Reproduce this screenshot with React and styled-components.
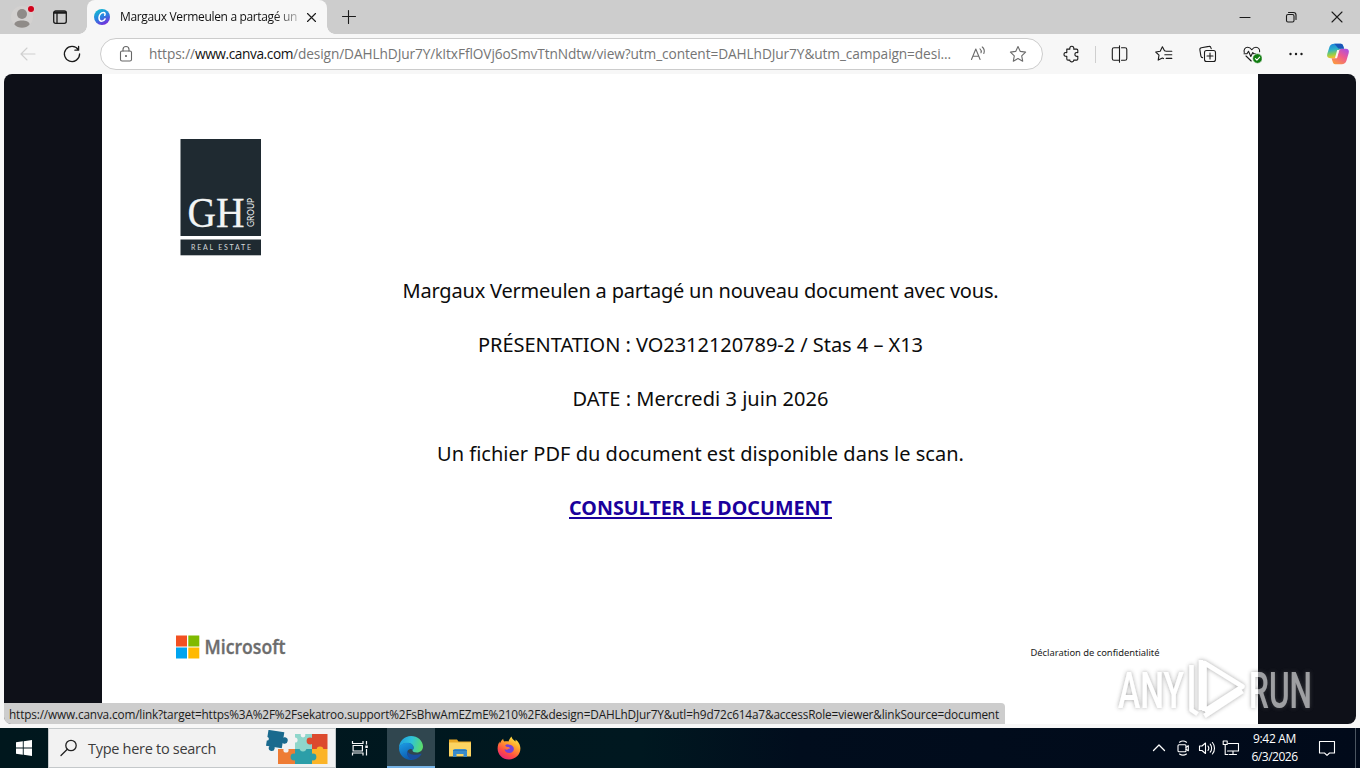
import React, { useLayoutEffect, useRef, useState } from 'react';
import styled, { createGlobalStyle, css } from 'styled-components';

const UI_FONT = '"Open Sans", "Noto Sans", sans-serif';

const GlobalStyle = createGlobalStyle`
    * {
        box-sizing: border-box;
    }

    body {
        margin: 0;
        overflow: hidden;
        font-family: ${UI_FONT};
    }

    svg {
        display: block;
        flex: none;
    }
`;

const Screen = styled.div`
    position: relative;
    width: 1360px;
    height: 768px;
    display: flex;
    flex-direction: column;
    overflow: hidden;
    background: #f7f7f7;
`;

/* ---------- fitted text ---------- */

const FitBox = styled.span`
    display: inline-block;
    white-space: pre;
    flex: none;
`;

// Spreads or tightens a single line so that it takes exactly `width` pixels.
const Fit = ({ width, children, className }) => {
    const ref = useRef(null);
    const [spacing, setSpacing] = useState(0);

    useLayoutEffect(() => {
        const natural = ref.current.getBoundingClientRect().width;
        setSpacing((width - natural) / children.length);
    }, []);

    return (
        <FitBox ref={ref} className={className} style={{ letterSpacing: `${spacing}px` }}>
            {children}
        </FitBox>
    );
};

/* ---------- tab strip ---------- */

const TabStrip = styled.div`
    height: 34px;
    flex: none;
    display: flex;
    align-items: stretch;
    background: #cdcdcd;
`;

const StripCell = styled.div`
    width: ${props => props.width}px;
    display: flex;
    align-items: center;
    justify-content: center;
`;

const Tab = styled.div`
    position: relative;
    width: 240px;
    display: flex;
    align-items: center;
    padding-left: 7px;
    background: #f7f7f7;
    border-radius: 8px 8px 0 0;

    &::before,
    &::after {
        content: '';
        position: absolute;
        bottom: 0;
        width: 8px;
        height: 8px;
    }

    &::before {
        left: -8px;
        background: radial-gradient(circle at 0 0, #cdcdcd 7.5px, #f7f7f7 8px);
    }

    &::after {
        right: -8px;
        background: radial-gradient(circle at 100% 0, #cdcdcd 7.5px, #f7f7f7 8px);
    }
`;

const TabTitle = styled.div`
    width: 177px;
    margin: 0 7px 0 10px;
    font-size: 12px;
    line-height: 18px;
    color: #101010;
    overflow: hidden;
    mask-image: linear-gradient(90deg, #000 154px, rgba(0, 0, 0, 0.3) 177px);
`;

const WindowButtons = styled.div`
    margin-left: auto;
    display: flex;
`;

/* ---------- toolbar ---------- */

const Toolbar = styled.div`
    height: 40px;
    flex: none;
    display: flex;
    align-items: center;
    background: #f7f7f7;
`;

const AddressBar = styled.div`
    width: 943px;
    height: 32px;
    display: flex;
    align-items: center;
    padding-left: 15px;
    background: #ffffff;
    border: 1px solid #cccccc;
    border-radius: 16px;
`;

const Url = styled.div`
    display: flex;
    margin: 0 16px 0 13px;
    font-size: 13.7px;
    line-height: 20px;
    color: #757575;
`;

const Host = styled(Fit)`
    color: #111111;
`;

const ToolGroup = styled.div`
    display: flex;
    align-items: center;
    padding-left: 7px;
`;

const ToolCell = styled.div`
    width: ${props => props.width || 44}px;
    height: 40px;
    flex: none;
    display: flex;
    align-items: center;
    justify-content: center;
`;

const ToolDivider = styled.div`
    width: 1px;
    height: 17px;
    margin: 0 2px 0 1px;
    background: #cfcfcf;
`;

/* ---------- page ---------- */

const Viewport = styled.div`
    height: 650px;
    flex: none;
    margin: 0 4px;
    display: flex;
    justify-content: center;
    background: #0e1018;
    border-radius: 8px;
    overflow: hidden;
`;

const Slide = styled.div`
    width: 1156px;
    display: flex;
    flex-direction: column;
    padding-top: 65px;
    background: #ffffff;
`;

const AgencyLogo = styled.div`
    padding-left: 78px;
`;

const Message = styled.div`
    display: flex;
    flex-direction: column;
    align-items: center;
    margin-top: 7.4px;
    padding-left: 41px;
`;

const Line = styled.div`
    height: 54.4px;
    display: flex;
    align-items: center;
    font-family: "Noto Sans", "Open Sans", sans-serif;
    font-size: 20px;
    line-height: 28px;
    color: #0c0c0c;
    ${props => props.link && css`
        color: #1a009c;
        font-weight: 700;
        font-size: 19.7px;
        text-decoration: underline;
        text-decoration-thickness: 2px;
        text-underline-offset: 2px;
    `}
`;

const SlideFooter = styled.div`
    display: flex;
    align-items: flex-start;
    justify-content: space-between;
    margin-top: 97.6px;
    padding: 0 98.5px 0 73px;
`;

const Privacy = styled.div`
    margin-top: 13px;
    font-family: "Noto Sans", sans-serif;
    font-size: 9.4px;
    line-height: 14px;
    color: #1b1b1b;
`;

const StatusBubble = styled.div`
    position: absolute;
    left: 4px;
    top: 703px;
    width: 1001px;
    height: 21px;
    display: flex;
    align-items: center;
    padding: 1px 0 0 5px;
    background: #cdcdcd;
    border-radius: 0 4px 0 7px;
    font-size: 11.8px;
    line-height: 20px;
    color: #1b1b1b;
`;

const Watermark = styled.div`
    position: absolute;
    left: 1110px;
    top: 650px;
`;

/* ---------- taskbar ---------- */

const Taskbar = styled.div`
    height: 40px;
    margin-top: 4px;
    flex: none;
    display: flex;
    background: linear-gradient(90deg, #00171d 0, #001820 640px, #010d1d 800px, #010a1a 100%);
`;

const TaskCell = styled.div`
    width: 48px;
    margin-right: ${props => props.gap || 0}px;
    display: flex;
    align-items: center;
    justify-content: center;
    ${props => props.active && css`
        background: #30464f;
        border-bottom: 2px solid #76b3e6;
        padding-top: 2px;
    `}
`;

const SearchBox = styled.div`
    width: 288px;
    display: flex;
    align-items: center;
    padding-left: 10px;
    background: #f2f2f2;
    border: 1px solid #c4c8ca;
    color: #3c3c3c;
    font-size: 14.5px;
`;

const SearchLabel = styled.div`
    margin: 2px 49px 0 9px;
    line-height: 20px;
`;

const Tray = styled.div`
    margin-left: auto;
    display: flex;
    align-items: center;
    color: #ffffff;
`;

const TrayCell = styled.div`
    width: 24px;
    display: flex;
    justify-content: center;
`;

const Clock = styled.div`
    width: 63px;
    margin-right: 1px;
    display: flex;
    flex-direction: column;
    align-items: center;
    font-size: 12px;
    line-height: 18px;
`;

const ActionCenter = styled.div`
    width: 48px;
    margin-left: -4px;
    display: flex;
    justify-content: center;
`;

const ShowDesktop = styled.div`
    width: 5px;
    height: 40px;
    margin-left: 4px;
    border-left: 1px solid #4b5560;
`;

/* ---------- icons ---------- */

const Stroke = ({ size = 20, color = '#1b1b1b', weight = 1.1, children }) => (
    <svg
        width={size}
        height={size}
        viewBox={`0 0 ${size} ${size}`}
        fill="none"
        stroke={color}
        strokeWidth={weight}
        strokeLinecap="round"
        strokeLinejoin="round"
    >
        {children}
    </svg>
);

const Profile = () => (
    <svg width="26" height="26" viewBox="0 0 26 26">
        <circle cx="13" cy="13" r="11" fill="#d3d1d0" />
        <circle cx="13" cy="10" r="5" fill="#8f8b88" />
        <path d="M5.4 20.500c0-2.800 3.600-4 7.600-4s7.600 1.200 7.600 4c-2 2.400-4.600 3.300-7.600 3.300s-5.600-.9-7.600-3.300z" fill="#8f8b88" />
        <circle cx="22" cy="5" r="3.900" fill="#e3c9cb" />
        <circle cx="22" cy="5" r="3" fill="#d0021b" />
    </svg>
);

const TabActions = () => (
    <Stroke size={16} weight={1.300}>
        <rect x="1.700" y="2" width="12.600" height="12.300" rx="2" />
        <path d="M2 4.200h12M2 3.200h12M5 4.500V14" />
    </Stroke>
);

const CanvaIcon = () => (
    <svg width="16" height="16" viewBox="0 0 16 16">
        <defs>
            <linearGradient id="canva" x1="0.200" y1="0" x2="0.700" y2="1">
                <stop offset="0" stopColor="#14bfd0" />
                <stop offset="0.500" stopColor="#2a82e0" />
                <stop offset="1" stopColor="#7a28dc" />
            </linearGradient>
        </defs>
        <circle cx="8" cy="8" r="8" fill="url(#canva)" />
        <path
            d="M10.700 6.300c.8-1.300.4-2.900-1.300-2.900-2.500 0-4.400 2.800-4.400 5.400 0 2 1.100 3.400 2.700 3.400 1.500 0 2.700-1 3.400-2.400"
            fill="none"
            stroke="#ffffff"
            strokeWidth="1.500"
            strokeLinecap="round"
        />
    </svg>
);

const Lock = () => (
    <Stroke size={20} color="#666666">
        <rect x="4.500" y="7" width="11" height="10" rx="1.600" />
        <path d="M7 7V5.500a3 3 0 0 1 6 0V7" />
        <circle cx="10" cy="12" r="0.500" fill="#666666" />
    </Stroke>
);

const ReadAloud = () => (
    <Stroke size={20} color="#6b6b6b">
        <path d="M2.500 15.500 6.800 5l4.300 10.500M4 12.200h5.600M11 4.800c1.200 1 1.500 2.500 1 4M13.300 3c1.900 1.800 2.400 4.300 1.500 6.500" />
    </Stroke>
);

const StarIcon = () => (
    <Stroke size={20} color="#6b6b6b">
        <path d="m10 2.500 2.300 4.900 5.300.7-3.900 3.700 1 5.400L10 14.600l-4.700 2.600 1-5.400-3.900-3.700 5.300-.7z" />
    </Stroke>
);

const Puzzle = () => (
    <Stroke>
        <path d="M4.800 5.100h3.100c-.5-1.700.4-2.800 1.900-2.800s2.400 1.100 1.900 2.800h2.900c.7 0 1.200.5 1.200 1.200v2.300c-1.700-.5-2.900.4-2.900 1.800s1.200 2.300 2.900 1.800v2.700c0 .7-.5 1.200-1.200 1.200h-2.900c.2 1.100-.7 1.800-1.900 1.800s-2.100-.7-1.900-1.800H6c-.7 0-1.200-.5-1.200-1.200v-2.700c-1.700.3-2.800-.4-2.800-1.800s1.100-2.300 2.800-1.800z" />
    </Stroke>
);

const SplitScreen = () => (
    <Stroke>
        <path d="M7.500 3.800H4.300c-1 0-1.800.8-1.800 1.800v8.800c0 1 .8 1.800 1.800 1.800h3.200V3.800M11.500 3.800h3.700c1 0 1.800.8 1.800 1.800v8.800c0 1-.8 1.800-1.800 1.800h-3.700M7.500 3.800h2M7.500 16.200h2M9.500 1.800v16.400" stroke="none" />
        <path d="M9.500 3.800H4c-1 0-1.700.8-1.700 1.800v8.800c0 1 .7 1.800 1.700 1.800h5.500M11.500 3.800H15c1 0 1.800.8 1.800 1.800v8.800c0 1-.8 1.800-1.800 1.800h-3.500M9.500 1.800v16.400" />
    </Stroke>
);

const Favorites = () => (
    <Stroke>
        <path d="M10.500 6.800 8.400 2.800 6.200 7.300l-4.500.7 3.300 3.200-.8 4.900L8.400 14M12.200 7.200h5.600M10.800 10.800h7M12.200 14.400h5.600M10.500 6.800l1 .2M8.400 14l1.100.6" />
    </Stroke>
);

const Collections = () => (
    <Stroke>
        <path d="M4.600 13.600c-.9 0-1.500-.6-1.700-1.500L1.900 5.800c-.2-1 .5-1.900 1.500-2.100l7.500-1.300c1-.2 1.900.5 2.100 1.500l.2.800" />
        <rect x="6.500" y="6.500" width="11" height="11" rx="2" />
        <path d="M12 9v6M9 12h6" />
    </Stroke>
);

const Health = () => (
    <Stroke>
        <path d="M2.200 8.500c-.7-3.100 1-5.300 3.400-5.300 1.700 0 3.100.9 4.200 2.500 1.100-1.600 2.500-2.500 4.200-2.500 2.200 0 4 2 3.600 4.600M4 12l5.200 5M2 9.800h3l1.500-2.500 2.300 5.200 2-4 1 1.300h2" />
        <circle cx="15.500" cy="14.500" r="4.900" fill="#107c10" stroke="#f7f7f7" strokeWidth="0.800" />
        <path d="m13.400 14.600 1.500 1.500 2.800-3" stroke="#ffffff" />
    </Stroke>
);

const Dots = () => (
    <svg width="20" height="20" viewBox="0 0 20 20" fill="#1b1b1b">
        <circle cx="4.500" cy="10" r="1.200" />
        <circle cx="10" cy="10" r="1.200" />
        <circle cx="15.500" cy="10" r="1.200" />
    </svg>
);

const Copilot = () => (
    <svg width="24" height="24" viewBox="0 0 24 24">
        <defs>
            <linearGradient id="cpA" x1="0" y1="0" x2="0.200" y2="1">
                <stop offset="0" stopColor="#1b7fe0" />
                <stop offset="0.450" stopColor="#2fb1c8" />
                <stop offset="0.750" stopColor="#8ccf50" />
                <stop offset="1" stopColor="#f4c22c" />
            </linearGradient>
            <linearGradient id="cpB" x1="0.900" y1="0" x2="0.200" y2="1">
                <stop offset="0" stopColor="#a650e8" />
                <stop offset="0.450" stopColor="#ee5a90" />
                <stop offset="1" stopColor="#fb9a3e" />
            </linearGradient>
        </defs>
        <path d="M8.300 1.700h6.500c1.500 0 2.100 1.100 2.500 2.500l.8 2.500h-2.700c-1.500 0-2.400 1-2.800 2.500l-1.400 4.600c-.5 1.500-1.300 2.400-2.900 2.400H4.200c-2.600 0-3.600-1.700-2.900-4.400l2.200-7c.8-2.300 2.400-3.100 4.800-3.100z" fill="url(#cpA)" />
        <path d="M8.300 1.700h6.500c1.500 0 2.100 1.100 2.500 2.500l.8 2.500h-2.700l-3-.3z" fill="#1a56b8" />
        <path d="M15.700 22.300H9.200c-1.500 0-2.100-1.100-2.500-2.500l-1.200-3.600h3c1.600 0 2.400-.9 2.900-2.400l1.400-4.600c.4-1.500 1.300-2.500 2.800-2.500h4.200c2.600 0 3.600 1.700 2.900 4.400l-2.200 7.500c-.8 2.600-2.400 3.700-4.800 3.700z" fill="url(#cpB)" />
        <path d="M13.300 8h-2.100l-2.300 8.200h2.100z" fill="#fff3f0" />
    </svg>
);

const GhLogo = () => (
    <svg width="81" height="117" viewBox="0 0 81 117">
        <rect x="0.500" width="80.500" height="97" fill="#1f2a31" />
        <rect x="0.500" y="100.500" width="80.500" height="15.800" fill="#1f2a31" />
        <text x="7.500" y="88" fontFamily="Liberation Serif, serif" fontSize="43" fill="#f2f4f4" stroke="#f2f4f4" strokeWidth="0.300" textLength="57" lengthAdjust="spacingAndGlyphs">GH</text>
        <text transform="translate(73.500 88) rotate(-90)" fontFamily="Lato, sans-serif" fontSize="8.500" fill="#f0f2f3" textLength="29" lengthAdjust="spacingAndGlyphs">GROUP</text>
        <text x="11" y="111" fontFamily="Lato, sans-serif" fontSize="7" fill="#d3d8da" textLength="60">REAL ESTATE</text>
    </svg>
);

const MicrosoftLogo = () => (
    <svg width="130" height="32" viewBox="0 0 130 32">
        <rect x="1" y="2.500" width="11" height="11" fill="#f25022" />
        <rect x="13.300" y="2.500" width="11" height="11" fill="#7fba00" />
        <rect x="1" y="14.500" width="11" height="11" fill="#00a4ef" />
        <rect x="13.300" y="14.500" width="11" height="11" fill="#ffb900" />
        <text x="29.500" y="20.800" fontFamily="Open Sans, sans-serif" fontWeight="600" fontSize="19" fill="#6c6c6c" stroke="#6c6c6c" strokeWidth="0.350" textLength="81" lengthAdjust="spacingAndGlyphs">Microsoft</text>
    </svg>
);

const AnyRunMark = () => (
    <svg width="226" height="84" viewBox="0 0 226 84" opacity="0.600">
        <defs>
            <filter id="soft" x="-10%" y="-10%" width="120%" height="120%">
                <feDropShadow dx="0" dy="0" stdDeviation="2" floodColor="#606060" floodOpacity="0.950" />
            </filter>
        </defs>
        <g filter="url(#soft)" fill="#ffffff">
            <text x="8" y="58" fontFamily="Roboto, sans-serif" fontWeight="500" fontSize="50" textLength="66" lengthAdjust="spacingAndGlyphs">ANY</text>
            <text x="139" y="58" fontFamily="Roboto, sans-serif" fontWeight="500" fontSize="50" textLength="63" lengthAdjust="spacingAndGlyphs">RUN</text>
            <path
                d="M94.500 61V13l38 23.500L94.500 61M91 10v50M81.500 15v45l6 4M94.500 66l38-25"
                fill="none"
                stroke="#ffffff"
                strokeWidth="4.500"
                strokeLinejoin="round"
            />
        </g>
    </svg>
);

const WindowsLogo = () => (
    <svg width="16" height="16" viewBox="0 0 16 16" fill="#ffffff">
        <path d="M0 2.200 6.800 1.300v6.200H0zM7.700 1.200 16 0v7.500H7.700zM0 8.400h6.800v6.300L0 13.800zM7.700 8.400H16V16l-8.300-1.200z" />
    </svg>
);

const SearchIcon = () => (
    <Stroke size={20} color="#222222" weight={1.300}>
        <circle cx="12" cy="7.500" r="5.200" />
        <path d="M8.300 11.200 2 17.500" />
    </Stroke>
);

const PuzzleArt = () => (
    <svg width="64" height="36" viewBox="0 0 64 36">
        <rect x="30" y="4" width="17" height="15" fill="#8fd6cb" />
        <rect x="47" y="4" width="15.500" height="15" fill="#dc4a2e" />
        <rect x="13" y="19" width="17" height="15" fill="#ee7c34" />
        <rect x="30" y="19" width="17" height="15" fill="#2c9ea8" />
        <rect x="47" y="19" width="15.500" height="15" fill="#fbb428" />
        <circle cx="38" cy="18" r="3.400" fill="#8fd6cb" />
        <circle cx="45" cy="11" r="3.400" fill="#dc4a2e" />
        <circle cx="38" cy="5" r="2.400" fill="#f2f2f2" />
        <circle cx="30" cy="10" r="2.600" fill="#f2f2f2" />
        <circle cx="55" cy="20" r="3.400" fill="#fbb428" />
        <circle cx="29" cy="27" r="3.400" fill="#2c9ea8" />
        <circle cx="48" cy="27" r="3.400" fill="#2c9ea8" />
        <circle cx="21" cy="20" r="2.600" fill="#f2f2f2" />
        <g transform="rotate(9 10 10)" fill="#1a6a8e">
            <rect x="2" y="1" width="16" height="16" />
            <circle cx="19.500" cy="9" r="3.200" />
            <circle cx="8" cy="18.500" r="3" />
            <circle cx="2" cy="10" r="1.800" fill="#f2f2f2" />
        </g>
    </svg>
);

const TaskView = () => (
    <svg width="20" height="20" viewBox="0 0 20 20" fill="none" stroke="#f4f6f7" strokeWidth="1.200">
        <path d="M2.500 3v2.500H13V3M2.500 17.500V15H13v2.500M3.100 7.500h9.300v5.500H3.100zM16.500 3v3.500M16.500 11v6.500" />
        <rect x="15.300" y="7.500" width="2.500" height="2.500" fill="#f4f6f7" stroke="none" />
    </svg>
);

const EdgeLogo = () => (
    <svg width="26" height="26" viewBox="0 0 26 26">
        <defs>
            <linearGradient id="edgeTop" x1="0" y1="0.300" x2="1" y2="0.500">
                <stop offset="0" stopColor="#1f9fe0" />
                <stop offset="0.500" stopColor="#2fc3d8" />
                <stop offset="1" stopColor="#5bdc6a" />
            </linearGradient>
            <linearGradient id="edgeSide" x1="0.200" y1="0" x2="0.600" y2="1">
                <stop offset="0" stopColor="#1c9be4" />
                <stop offset="1" stopColor="#0b58ac" />
            </linearGradient>
        </defs>
        <path d="M1 13C1 6 6.500 1 13 1s12 4.700 12 10.600c0 3.700-2.800 6-6.200 6-2.700 0-4.300-.9-4.300-2 0-.7 1.100-1.200 1.100-3 0-2.400-2.400-4.600-5.900-4.600C5.500 8 2 10.300 1 13z" fill="url(#edgeTop)" />
        <path d="M1 13c.8-3 4-5.300 8.200-5.300 3.800 0 6.400 2.200 6.400 4.900 0 1.500-.7 2-1 2.700-1-2-4.600-1.500-5.200 1.500-.7 3.800 2.500 7.300 6.300 7.900-1 .3-1.800.3-2.700.3C6.400 25 1 19.800 1 13z" fill="url(#edgeSide)" />
        <path d="M9.300 15.500c-1.500 4.700 2 8.900 6.400 9.200 3.300-.7 6-2.700 7.700-5.500.3-.5-.1-.8-.6-.5-5.500 2.500-13 .7-13.500-3.200z" fill="#1a4e9e" />
    </svg>
);

const Explorer = () => (
    <svg width="22" height="20" viewBox="0 0 22 20">
        <path d="M0 1.500h8l1.500 2H22V18H0z" fill="#e9a825" />
        <path d="M0 4.500h22V18.500H0z" fill="#fcd462" />
        <path d="M4 19v-6c0-1.200.8-2 2-2h10c1.200 0 2 .8 2 2v6h-3.500v-3h-7v3z" fill="#3b8ccb" />
        <path d="M4 12.500h14" stroke="#2a78b8" />
    </svg>
);

const Firefox = () => (
    <svg width="24" height="24" viewBox="0 0 24 24">
        <defs>
            <linearGradient id="fox" x1="0.800" y1="0" x2="0.250" y2="1">
                <stop offset="0" stopColor="#fff04a" />
                <stop offset="0.350" stopColor="#ffa52c" />
                <stop offset="0.700" stopColor="#ff4f42" />
                <stop offset="1" stopColor="#e8207c" />
            </linearGradient>
        </defs>
        <path d="M14.500.5c.3 2.300 2.100 3.300 3.900 5 .3-.6.2-1.300 0-1.900 2.700 1.600 5 5.100 5 9C23.400 18.800 18.400 23.500 12 23.500S.6 18.700.6 12.500C.6 9.800 1.500 7.300 2.600 5.600c0 .7 0 1.300.3 1.900C3.700 5.700 4.300 4.200 6.200 2.700c0 1.300.5 2.200 1.300 2.700 1.200-.4 2.700-.3 4 .1.600-1.800 1.400-3.500 3-5z" fill="url(#fox)" />
        <path d="M8.200 9.300c1.200-1.200 2.900-1.300 4.200-.5 2.200.1 4.500 1.700 4.500 4.200 0 2.300-2 4-4.600 4-2.700 0-4.500-1.700-4.800-3.800.9.500 2 .7 3 .2.900-.4 1.500-.8 2.500-.8.1-1.200-1.300-1.300-2.600-1.500-1.100-.2-1.900-.8-2.200-1.800z" fill="#7542d8" />
    </svg>
);

const Chevron = () => (
    <Stroke size={14} color="#ffffff" weight={1.300}>
        <path d="m1.500 9.500 5.500-5.500 5.500 5.500" />
    </Stroke>
);

const MeetNow = () => (
    <Stroke size={16} color="#ffffff">
        <path d="M4.500 2.200c2-1.300 5-1.300 7 0M4.500 14c2 1.300 5 1.300 7 0M11 7.200l2.300-1.500v5L11 9.300" />
        <rect x="3" y="4.700" width="8" height="7" rx="1" />
    </Stroke>
);

const Volume = () => (
    <Stroke size={18} color="#ffffff">
        <path d="M1.500 7v4.500H4l3.500 3V4L4 7zM10 7c.9 1.200.9 3.300 0 4.500M12.200 5.200c1.900 2.200 1.900 5.800 0 8M14.400 3.500c2.800 3.200 2.800 8.300 0 11.500" />
    </Stroke>
);

const Network = () => (
    <Stroke size={18} color="#ffffff">
        <path d="M6.500 4.500h10v7.500H5.500M11 12v3.500M7.500 15.500h7M3.200 6v9.500h2.800" />
        <path d="M1.200 2h4v3.500h-4z" />
    </Stroke>
);

const Notice = () => (
    <Stroke size={18} color="#ffffff">
        <path d="M1.500 2.500h15v11.500h-5L9 16.300 6.500 14h-5z" />
    </Stroke>
);

/* ---------- screen ---------- */

const lines = [
    { text: 'Margaux Vermeulen a partagé un nouveau document avec vous.', width: 596 },
    { text: 'PRÉSENTATION : VO2312120789-2 / Stas 4 – X13', width: 445 },
    { text: 'DATE : Mercredi 3 juin 2026', width: 256 },
    { text: 'Un fichier PDF du document est disponible dans le scan.', width: 527 },
    { text: 'CONSULTER LE DOCUMENT', width: 263, link: true }
];

const App = () => (
    <Screen>
        <GlobalStyle />
        <TabStrip>
            <StripCell width={44}><Profile /></StripCell>
            <StripCell width={32}><TabActions /></StripCell>
            <StripCell width={11} />
            <Tab>
                <CanvaIcon />
                <TabTitle><Fit width={177}>Margaux Vermeulen a partagé un</Fit></TabTitle>
                <Stroke size={14}><path d="m3.500 3.500 8 8M11.500 3.500l-8 8" /></Stroke>
            </Tab>
            <StripCell width={43}>
                <Stroke size={16}><path d="M1.500 7.500h13M7.500 1.500v13" /></Stroke>
            </StripCell>
            <WindowButtons>
                <StripCell width={46}><Stroke size={14}><path d="M2 7.500h10" /></Stroke></StripCell>
                <StripCell width={46}>
                    <Stroke size={14}>
                        <rect x="2.500" y="4.500" width="7.500" height="7.500" rx="1.500" />
                        <path d="M4.500 2.500h5c1.400 0 2.500 1.100 2.500 2.500v4.500" />
                    </Stroke>
                </StripCell>
                <StripCell width={46}><Stroke size={14}><path d="m2 2 10 10M12 2 2 12" /></Stroke></StripCell>
            </WindowButtons>
        </TabStrip>

        <Toolbar>
            <ToolCell width={56}>
                <Stroke color="#cfcfcf"><path d="M17 10H3M9 4l-6 6 6 6" /></Stroke>
            </ToolCell>
            <ToolCell width={32}>
                <Stroke weight={1.300}>
                    <path d="M16.300 5.700A7.600 7.600 0 1 0 17.600 10M16.600 2.500v3.700h-3.700" />
                </Stroke>
            </ToolCell>
            <ToolCell width={12} />
            <AddressBar>
                <Lock />
                <Url>
                    <Fit width={46}>https://</Fit>
                    <Host width={98}>www.canva.com</Host>
                    <Fit width={658}>/design/DAHLhDJur7Y/kItxFflOVj6oSmvTtnNdtw/view?utm_content=DAHLhDJur7Y&utm_campaign=desi...</Fit>
                </Url>
                <ToolCell width={24}><ReadAloud /></ToolCell>
                <ToolCell width={54}><StarIcon /></ToolCell>
            </AddressBar>
            <ToolGroup>
                <ToolCell><Puzzle /></ToolCell>
                <ToolDivider />
                <ToolCell><SplitScreen /></ToolCell>
                <ToolCell><Favorites /></ToolCell>
                <ToolCell><Collections /></ToolCell>
                <ToolCell><Health /></ToolCell>
                <ToolCell><Dots /></ToolCell>
                <ToolCell width={40}><Copilot /></ToolCell>
            </ToolGroup>
        </Toolbar>

        <Viewport>
            <Slide>
                <AgencyLogo><GhLogo /></AgencyLogo>
                <Message>
                    {lines.map(line => (
                        <Line key={line.text} link={line.link}>
                            <Fit width={line.width}>{line.text}</Fit>
                        </Line>
                    ))}
                </Message>
                <SlideFooter>
                    <MicrosoftLogo />
                    <Privacy><Fit width={129}>Déclaration de confidentialité</Fit></Privacy>
                </SlideFooter>
            </Slide>
        </Viewport>

        <Taskbar>
            <TaskCell><WindowsLogo /></TaskCell>
            <SearchBox>
                <SearchIcon />
                <SearchLabel><Fit width={128}>Type here to search</Fit></SearchLabel>
                <PuzzleArt />
            </SearchBox>
            <TaskCell gap={3}><TaskView /></TaskCell>
            <TaskCell gap={1} active><EdgeLogo /></TaskCell>
            <TaskCell gap={1}><Explorer /></TaskCell>
            <TaskCell><Firefox /></TaskCell>
            <Tray>
                <TrayCell><Chevron /></TrayCell>
                <TrayCell><MeetNow /></TrayCell>
                <TrayCell><Volume /></TrayCell>
                <TrayCell><Network /></TrayCell>
                <Clock>
                    <Fit width={43}>9:42 AM</Fit>
                    <Fit width={46}>6/3/2026</Fit>
                </Clock>
                <ActionCenter><Notice /></ActionCenter>
                <ShowDesktop />
            </Tray>
        </Taskbar>

        <StatusBubble>
            <Fit width={990}>https://www.canva.com/link?target=https%3A%2F%2Fsekatroo.support%2FsBhwAmEZmE%210%2F&design=DAHLhDJur7Y&utl=h9d72c614a7&accessRole=viewer&linkSource=document</Fit>
        </StatusBubble>
        <Watermark><AnyRunMark /></Watermark>
    </Screen>
);

export default App;
